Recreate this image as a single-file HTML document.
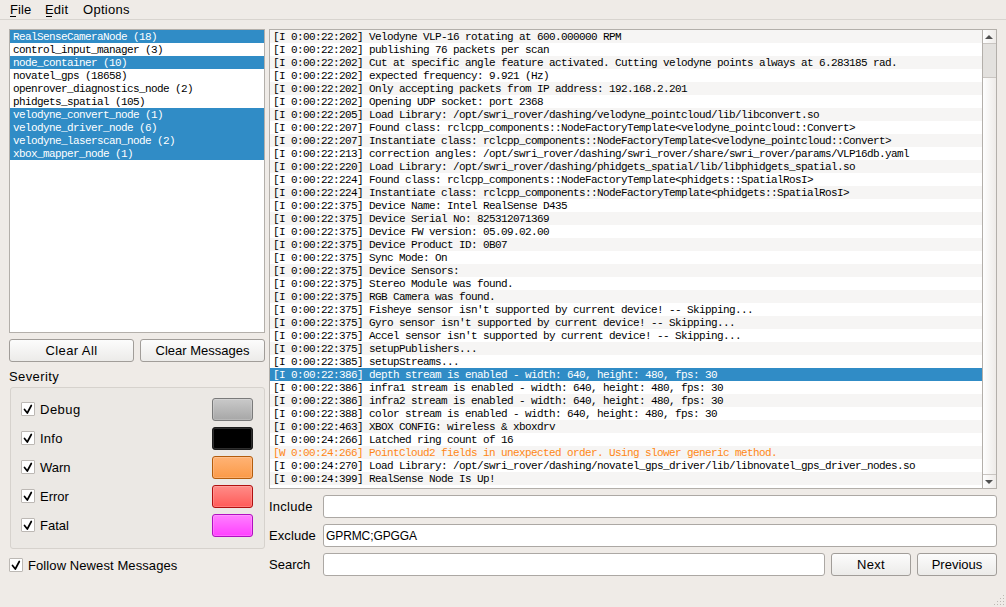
<!DOCTYPE html>
<html><head><meta charset="utf-8">
<style>
*{box-sizing:border-box;margin:0;padding:0}
html,body{width:1006px;height:607px;overflow:hidden;background:#efebe7}
body{position:relative;font-family:"Liberation Sans",sans-serif;font-size:13px;color:#000}
.abs{position:absolute}
.menu{position:absolute;left:0;top:0;width:1006px;height:19px}
.menu span{position:absolute;top:2px;line-height:16px;white-space:nowrap}
.menu u{text-decoration:none;border-bottom:1px solid #000}
.msep{position:absolute;left:0;top:19px;width:1006px;height:1px;background:#d8d4cf}
.frame{position:absolute;background:#fff;border:1px solid #b3afaa}
.mono{font-family:"Liberation Mono",monospace;font-size:11px;letter-spacing:-0.6px}
.nodes .r{height:13px;line-height:15px;padding-left:3px;white-space:nowrap;color:#000}
.nodes .r.sel{background:#308cc6;color:#fff}
.log{overflow:hidden}
.log .r{height:13px;line-height:15px;padding-left:3px;white-space:pre;color:#000}
.log .r.alt{background:#f6f5f4}
.log .r.base{background:#fff}
.log .r.sel{background:#308cc6;color:#fff}
.log .r.warn{color:#ff8714}
.btn{position:absolute;border:1px solid #a19d99;border-radius:3px;background:linear-gradient(#fcfcfc,#ecebe9);text-align:center;line-height:21px;white-space:nowrap}
.input{position:absolute;border:1px solid #aca8a4;border-radius:3px;background:#fff;line-height:21px;padding-left:3px;white-space:nowrap}
.label{position:absolute;white-space:nowrap;line-height:18px}
.cb{position:absolute;width:14px;height:14px;border:1px solid #bcb8b4;border-radius:1px;background:#fff}
.cb svg{position:absolute;left:-1px;top:-1px}
.sw{position:absolute;width:41px;height:23px;border-radius:3px;border:1px solid;box-shadow:inset 0 0 0 1px rgba(255,255,255,0.18)}
.group{position:absolute;border:1px solid #d6d2cd;border-radius:3px;background:#ebe8e4}
</style></head><body>
<div class="menu">
<span style="left:10px;letter-spacing:0.1px">File</span>
<span style="left:45px;letter-spacing:0.2px">Edit</span>
<span style="left:83px;letter-spacing:0.3px">Options</span>
<div class="abs" style="left:10px;top:16px;width:6px;height:1px;background:#000"></div>
<div class="abs" style="left:46px;top:16px;width:6px;height:1px;background:#000"></div>
</div>
<div class="msep"></div>

<div class="frame nodes mono" style="left:9px;top:29px;width:256px;height:304px;">
<div class="r sel">RealSenseCameraNode (18)</div>
<div class="r">control_input_manager (3)</div>
<div class="r sel">node_container (10)</div>
<div class="r">novatel_gps (18658)</div>
<div class="r">openrover_diagnostics_node (2)</div>
<div class="r">phidgets_spatial (105)</div>
<div class="r sel">velodyne_convert_node (1)</div>
<div class="r sel">velodyne_driver_node (6)</div>
<div class="r sel">velodyne_laserscan_node (2)</div>
<div class="r sel">xbox_mapper_node (1)</div>
</div>

<div class="btn" style="left:9px;top:339px;width:125px;height:23px"><span style="letter-spacing:0.4px">Clear All</span></div>
<div class="btn" style="left:140px;top:339px;width:125px;height:23px">Clear Messages</div>

<div class="label" style="left:9px;top:368px;letter-spacing:0.4px">Severity</div>
<div class="group" style="left:10px;top:387px;width:255px;height:162px"></div>

<div class="cb" style="left:21px;top:402px"><svg width="14" height="14"><path d="M3.5 7.4 L6.3 11 L10.3 3.5" stroke="#000" stroke-width="1.7" fill="none" stroke-linecap="round" stroke-linejoin="round"/></svg></div>
<div class="label" style="left:40px;top:401px;letter-spacing:0.5px">Debug</div>
<div class="sw" style="left:212px;top:398px;background:linear-gradient(#c9c9c9,#a7a7a7);border-color:#7a7a7a"></div>

<div class="cb" style="left:21px;top:431px"><svg width="14" height="14"><path d="M3.5 7.4 L6.3 11 L10.3 3.5" stroke="#000" stroke-width="1.7" fill="none" stroke-linecap="round" stroke-linejoin="round"/></svg></div>
<div class="label" style="left:40px;top:430px;letter-spacing:0.26px">Info</div>
<div class="sw" style="left:212px;top:427px;background:#000;border-color:#1c1c1c"></div>

<div class="cb" style="left:21px;top:460px"><svg width="14" height="14"><path d="M3.5 7.4 L6.3 11 L10.3 3.5" stroke="#000" stroke-width="1.7" fill="none" stroke-linecap="round" stroke-linejoin="round"/></svg></div>
<div class="label" style="left:40px;top:459px">Warn</div>
<div class="sw" style="left:212px;top:456px;background:linear-gradient(#ffb375,#fb9a48);border-color:#b35c0c"></div>

<div class="cb" style="left:21px;top:489px"><svg width="14" height="14"><path d="M3.5 7.4 L6.3 11 L10.3 3.5" stroke="#000" stroke-width="1.7" fill="none" stroke-linecap="round" stroke-linejoin="round"/></svg></div>
<div class="label" style="left:40px;top:488px">Error</div>
<div class="sw" style="left:212px;top:485px;background:linear-gradient(#ff8c88,#ff5b58);border-color:#b01010"></div>

<div class="cb" style="left:21px;top:518px"><svg width="14" height="14"><path d="M3.5 7.4 L6.3 11 L10.3 3.5" stroke="#000" stroke-width="1.7" fill="none" stroke-linecap="round" stroke-linejoin="round"/></svg></div>
<div class="label" style="left:40px;top:517px">Fatal</div>
<div class="sw" style="left:212px;top:514px;background:linear-gradient(#ff80ff,#ff40ff);border-color:#b010c0"></div>

<div class="cb" style="left:9px;top:558px"><svg width="14" height="14"><path d="M3.5 7.4 L6.3 11 L10.3 3.5" stroke="#000" stroke-width="1.7" fill="none" stroke-linecap="round" stroke-linejoin="round"/></svg></div>
<div class="label" style="left:28px;top:557px;letter-spacing:0.09px">Follow Newest Messages</div>

<div class="frame log mono" style="left:269px;top:29px;width:728px;height:460px;">
<div class="abs" style="left:0;top:0;width:712px">
<div class="r alt">[I 0:00:22:202] Velodyne VLP-16 rotating at 600.000000 RPM</div>
<div class="r base">[I 0:00:22:202] publishing 76 packets per scan</div>
<div class="r alt">[I 0:00:22:202] Cut at specific angle feature activated. Cutting velodyne points always at 6.283185 rad.</div>
<div class="r base">[I 0:00:22:202] expected frequency: 9.921 (Hz)</div>
<div class="r alt">[I 0:00:22:202] Only accepting packets from IP address: 192.168.2.201</div>
<div class="r base">[I 0:00:22:202] Opening UDP socket: port 2368</div>
<div class="r alt">[I 0:00:22:205] Load Library: /opt/swri_rover/dashing/velodyne_pointcloud/lib/libconvert.so</div>
<div class="r base">[I 0:00:22:207] Found class: rclcpp_components::NodeFactoryTemplate&lt;velodyne_pointcloud::Convert&gt;</div>
<div class="r alt">[I 0:00:22:207] Instantiate class: rclcpp_components::NodeFactoryTemplate&lt;velodyne_pointcloud::Convert&gt;</div>
<div class="r base">[I 0:00:22:213] correction angles: /opt/swri_rover/dashing/swri_rover/share/swri_rover/params/VLP16db.yaml</div>
<div class="r alt">[I 0:00:22:220] Load Library: /opt/swri_rover/dashing/phidgets_spatial/lib/libphidgets_spatial.so</div>
<div class="r base">[I 0:00:22:224] Found class: rclcpp_components::NodeFactoryTemplate&lt;phidgets::SpatialRosI&gt;</div>
<div class="r alt">[I 0:00:22:224] Instantiate class: rclcpp_components::NodeFactoryTemplate&lt;phidgets::SpatialRosI&gt;</div>
<div class="r base">[I 0:00:22:375] Device Name: Intel RealSense D435</div>
<div class="r alt">[I 0:00:22:375] Device Serial No: 825312071369</div>
<div class="r base">[I 0:00:22:375] Device FW version: 05.09.02.00</div>
<div class="r alt">[I 0:00:22:375] Device Product ID: 0B07</div>
<div class="r base">[I 0:00:22:375] Sync Mode: On</div>
<div class="r alt">[I 0:00:22:375] Device Sensors:</div>
<div class="r base">[I 0:00:22:375] Stereo Module was found.</div>
<div class="r alt">[I 0:00:22:375] RGB Camera was found.</div>
<div class="r base">[I 0:00:22:375] Fisheye sensor isn&#x27;t supported by current device! -- Skipping...</div>
<div class="r alt">[I 0:00:22:375] Gyro sensor isn&#x27;t supported by current device! -- Skipping...</div>
<div class="r base">[I 0:00:22:375] Accel sensor isn&#x27;t supported by current device! -- Skipping...</div>
<div class="r alt">[I 0:00:22:375] setupPublishers...</div>
<div class="r base">[I 0:00:22:385] setupStreams...</div>
<div class="r alt sel">[I 0:00:22:386] depth stream is enabled - width: 640, height: 480, fps: 30</div>
<div class="r base">[I 0:00:22:386] infra1 stream is enabled - width: 640, height: 480, fps: 30</div>
<div class="r alt">[I 0:00:22:386] infra2 stream is enabled - width: 640, height: 480, fps: 30</div>
<div class="r base">[I 0:00:22:388] color stream is enabled - width: 640, height: 480, fps: 30</div>
<div class="r alt">[I 0:00:22:463] XBOX CONFIG: wireless &amp; xboxdrv</div>
<div class="r base">[I 0:00:24:266] Latched ring count of 16</div>
<div class="r alt warn">[W 0:00:24:266] PointCloud2 fields in unexpected order. Using slower generic method.</div>
<div class="r base">[I 0:00:24:270] Load Library: /opt/swri_rover/dashing/novatel_gps_driver/lib/libnovatel_gps_driver_nodes.so</div>
<div class="r alt">[I 0:00:24:399] RealSense Node Is Up!</div>
<div class="r base"></div>
</div>
<div class="abs" style="left:712px;top:0;width:14px;height:458px;border-left:1px solid #b3afaa;background:linear-gradient(90deg,#fefefe,#eeebe8)">
 <div class="abs" style="left:0;top:13px;width:13px;height:1px;background:#c9c5c1"></div>
 <div class="abs" style="left:0;top:14px;width:13px;height:34px;background:#e3e1de;border-bottom:1px solid #c9c5c1"></div>
 <div class="abs" style="left:0;top:444px;width:13px;height:1px;background:#c9c5c1"></div>
 <svg class="abs" style="left:1px;top:4px" width="10" height="6"><path d="M1 5 L5 1 L9 5 Z" fill="#505050"/></svg>
 <svg class="abs" style="left:1px;top:449px" width="10" height="6"><path d="M1 1 L5 5 L9 1 Z" fill="#505050"/></svg>
</div>
</div>

<div class="label" style="left:269px;top:498px;letter-spacing:0.25px">Include</div>
<div class="input" style="left:323px;top:495px;width:674px;height:23px"></div>
<div class="label" style="left:269px;top:527px;letter-spacing:0.1px">Exclude</div>
<div class="input" style="left:323px;top:524px;width:674px;height:23px"><span style="font-size:12px;letter-spacing:-0.1px;margin-left:-1px">GPRMC;GPGGA</span></div>
<div class="label" style="left:269px;top:556px">Search</div>
<div class="input" style="left:323px;top:553px;width:502px;height:23px"></div>
<div class="btn" style="left:831px;top:553px;width:80px;height:23px"><span style="letter-spacing:0.3px">Next</span></div>
<div class="btn" style="left:917px;top:553px;width:80px;height:23px">Previous</div>

<svg class="abs" style="left:994px;top:594px" width="12" height="12">
<g fill="#bdb8b3"><rect x="9" y="1" width="1" height="1"/><rect x="6" y="4" width="1" height="1"/><rect x="9" y="4" width="1" height="1"/><rect x="3" y="7" width="1" height="1"/><rect x="6" y="7" width="1" height="1"/><rect x="9" y="7" width="1" height="1"/><rect x="0" y="10" width="1" height="1"/><rect x="3" y="10" width="1" height="1"/><rect x="6" y="10" width="1" height="1"/><rect x="9" y="10" width="1" height="1"/></g>
</svg>
</body></html>
